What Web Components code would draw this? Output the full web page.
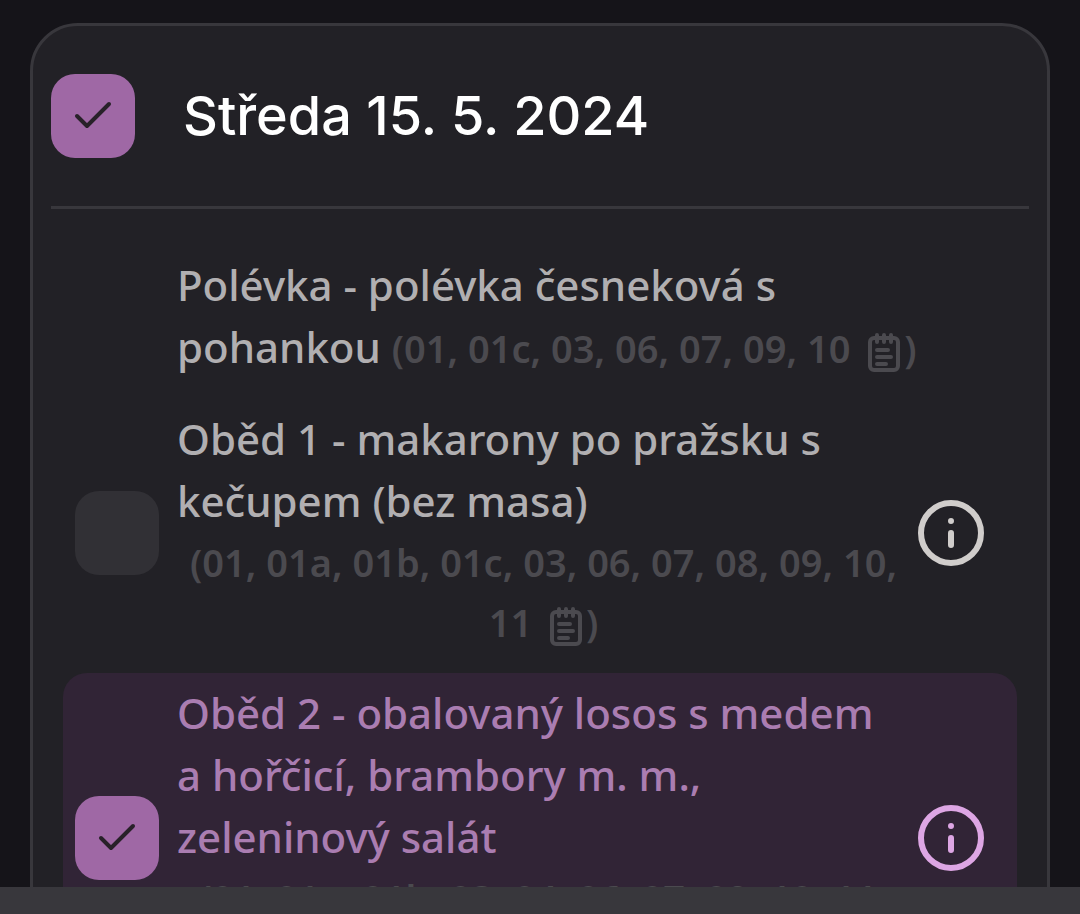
<!DOCTYPE html>
<html lang="cs">
<head>
<meta charset="utf-8">
<meta name="viewport" content="width=device-width, initial-scale=1">
<title>Jídelníček</title>
<style>
  body {
    margin: 0;
    background: #151419;
    font-family: "Noto Sans", "Open Sans", sans-serif;
  }
</style>
</head>
<body>

<template id="screen-template">
  <style>
    :host {
      display: flex;
      flex-direction: column;
      height: 100vh;
    }
    main {
      flex: 1;
      min-height: 0;
      overflow: hidden;
      padding: 23px 30px 0;
    }
    footer {
      height: 27px;
      background: #38373c;
    }
  </style>
  <main><slot></slot></main>
  <footer></footer>
</template>

<!-- Check box -->
<template id="check-template">
  <style>
    :host {
      display: grid;
      flex: none;
      width: 84px;
      height: 84px;
    }
    input, svg {
      grid-area: 1 / 1;
      width: 84px;
      height: 84px;
      margin: 0;
    }
    input {
      appearance: none;
      border-radius: 24px;
      background: #313035;
    }
    input:checked {
      background: #9f68a5;
    }
    svg {
      visibility: hidden;
      pointer-events: none;
      fill: none;
      stroke: #282129;
      stroke-width: 4;
      stroke-linecap: round;
      stroke-linejoin: round;
    }
    input:checked + svg {
      visibility: visible;
    }
  </style>
  <input type="checkbox">
  <svg viewBox="0 0 84 84" aria-hidden="true"><path d="M26 42 L36 52 L58 30"/></svg>
</template>

<!-- One day -->
<template id="day-template">
  <style>
    :host {
      display: block;
      padding: 0 18px;
      border: 3px solid #38373c;
      border-radius: 48px;
      background: #222126;
    }
    header {
      display: flex;
      align-items: center;
      gap: 48px;
      padding: 48px 0;
      border-bottom: 3px solid #38373c;
    }
    h2 {
      margin: 0;
      color: #fff;
      font: 500 54px/60px Inter, sans-serif;
    }
    .meals {
      display: flex;
      flex-direction: column;
      gap: 6px;
      padding: 36px 12px;
    }
  </style>
  <header>
    <menu-check></menu-check>
    <h2></h2>
  </header>
  <div class="meals"><slot></slot></div>
</template>

<template id="allergens-template">
  <style>
    :host {
      display: inline-block;
    }
    button {
      display: block;
      padding: 0;
      border: 0;
      background: none;
      color: #4b4a4f;
      font: inherit;
      font-size: 38px;
      font-weight: 600;
      line-height: 60px;
      text-align: center;
    }
    svg {
      width: 32px;
      height: 40px;
      margin: 0 4px 0 8px;
      vertical-align: -10px;
      fill: none;
      stroke: currentColor;
      stroke-width: 4;
      stroke-linecap: round;
    }
    .end {
      white-space: nowrap;
    }
  </style>
  <button type="button">(<slot></slot> <span class="end"><svg viewBox="0 0 32 40" aria-hidden="true"><rect x="2" y="5" width="28" height="32" rx="4"/><path d="M9 2v7M16 2v7M23 2v7M9 17h11M9 24h14M9 31h9"/></svg>)</span></button>
</template>

<!-- One meal of the day -->
<template id="meal-template">
  <style>
    :host {
      display: flex;
      align-items: center;
      gap: 8px;
      padding: 9px 33px 9px 12px;
      border-radius: 24px;
      color: #b1afb1;
    }
    :host([ordered]) {
      background: #312436;
      color: #aa7db1;
    }
    :host([soup]) {
      padding: 9px 12px 9px 104px;
    }
    :host([soup]) menu-check,
    :host([soup]) .info {
      display: none;
    }
    :host(:not([soup])) ::slotted(menu-allergens) {
      vertical-align: top;
    }
    .name {
      flex: 1;
      padding: 0 0 6px 10px;
      font-size: 42px;
      font-weight: 500;
      line-height: 62px;
    }
    .info {
      flex: none;
      width: 66px;
      height: 66px;
      padding: 0;
      border: 0;
      background: none;
      color: #d0cdcb;
    }
    :host([ordered]) .info {
      color: #dda6e4;
    }
    .info svg {
      display: block;
      fill: none;
      stroke: currentColor;
      stroke-width: 6;
      stroke-linecap: round;
    }
  </style>
  <menu-check></menu-check>
  <div class="name"><slot></slot></div>
  <button class="info" type="button" aria-label="Info">
    <svg width="66" height="66" viewBox="0 0 66 66" aria-hidden="true"><circle cx="33" cy="33" r="30"/><path d="M33 21v0M33 33v12"/></svg>
  </button>
</template>

<menu-screen>
  <menu-day date="Středa 15. 5. 2024">
    <menu-meal soup>Polévka - polévka česneková s<br>pohankou <menu-allergens>01, 01c, 03, 06, 07, 09, 10</menu-allergens></menu-meal>
    <menu-meal label="Oběd 1">Oběd 1 - makarony po pražsku s<br>kečupem (bez masa) <menu-allergens>01, 01a, 01b, 01c, 03, 06, 07, 08, 09, 10, 11</menu-allergens></menu-meal>
    <menu-meal label="Oběd 2" ordered>Oběd 2 - obalovaný losos s medem<br>a hořčicí, brambory m. m.,<br>zeleninový salát <menu-allergens>01, 01a, 01b, 03, 04, 06, 07, 09, 10, 11, 12</menu-allergens></menu-meal>
  </menu-day>
</menu-screen>

<script>
  class MenuElement extends HTMLElement {
    constructor(id) {
      super();
      const shadowRoot = this.attachShadow({ mode: 'open' });
      shadowRoot.appendChild(document.querySelector(id).content.cloneNode(true));
    }
  }

  class MenuScreen extends MenuElement {
    constructor() {
      super('#screen-template');
    }
  }

  class MenuCheck extends MenuElement {
    static observedAttributes = ['checked', 'label'];

    constructor() {
      super('#check-template');
    }

    attributeChangedCallback(name, oldValue, value) {
      const input = this.shadowRoot.querySelector('input');

      if (name === 'checked') {
        input.checked = value !== null;
      } else {
        input.setAttribute('aria-label', value);
      }
    }
  }

  class MenuAllergens extends MenuElement {
    constructor() {
      super('#allergens-template');
    }
  }

  class MenuDay extends MenuElement {
    constructor() {
      super('#day-template');
    }

    connectedCallback() {
      const date = this.getAttribute('date');
      const check = this.shadowRoot.querySelector('menu-check');

      this.shadowRoot.querySelector('h2').textContent = date;
      check.setAttribute('label', date);
      check.toggleAttribute('checked', this.querySelector('[ordered]') !== null);
    }
  }

  class MenuMeal extends MenuElement {
    constructor() {
      super('#meal-template');
    }

    connectedCallback() {
      const check = this.shadowRoot.querySelector('menu-check');

      check.setAttribute('label', this.getAttribute('label') || '');
      check.toggleAttribute('checked', this.hasAttribute('ordered'));
    }
  }

  customElements.define('menu-check', MenuCheck);
  customElements.define('menu-allergens', MenuAllergens);
  customElements.define('menu-meal', MenuMeal);
  customElements.define('menu-day', MenuDay);
  customElements.define('menu-screen', MenuScreen);
</script>
</body>
</html>
